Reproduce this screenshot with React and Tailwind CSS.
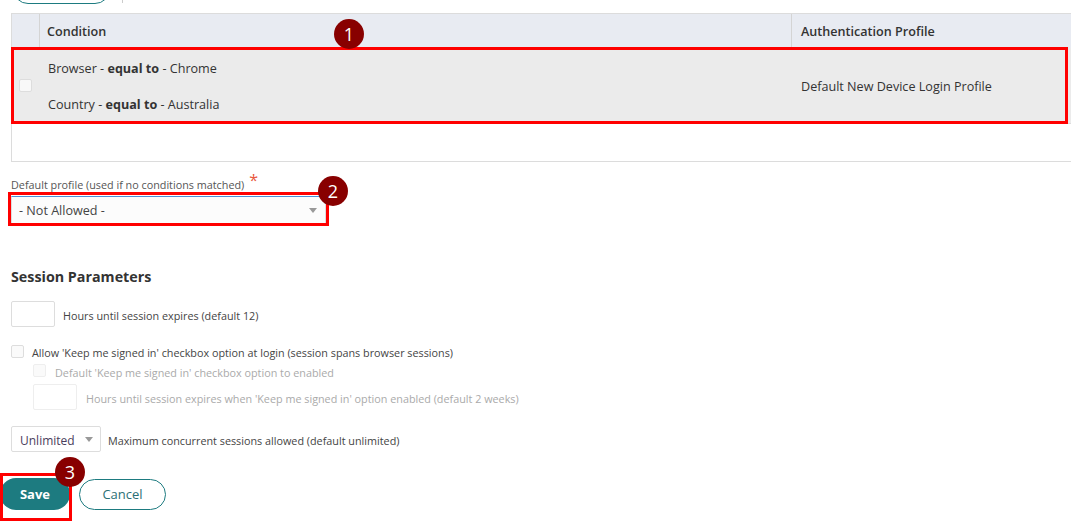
import React from 'react';

function Badge({ n, className }) {
  return (
    <div
      className={`absolute w-[30px] h-[30px] rounded-full bg-[#880000] text-white text-[18px] leading-[30px] text-center ${className}`}
    >
      {n}
    </div>
  );
}

function Caret() {
  return (
    <span className="w-0 h-0 border-l-[4px] border-r-[4px] border-t-[5px] border-l-transparent border-r-transparent border-t-[#999]" />
  );
}

export default function App() {
  return (
    <div
      className="relative w-[1071px] h-[525px] overflow-hidden bg-white text-[#333]"
      style={{ fontFamily: '"Open Sans", "Liberation Sans", sans-serif' }}
    >
      {/* top button, mostly scrolled off */}
      <div className="h-[13px] flex items-start">
        <div className="ml-[13px] -mt-[26px] w-[97px] h-[30px] rounded-full border border-[#1d7b80]" />
        <div className="ml-[12px] w-px h-[3px] bg-[#ccc]" />
      </div>

      {/* conditions table */}
      <div className="ml-[11px] w-[1080px] border border-[#dcdcdc]">
        <div className="flex h-[34px] bg-[#e8ebf2] text-[12.6px] font-semibold">
          <div className="w-[28px] border-r border-[#d4d4d4]" />
          <div className="w-[752px] border-r border-[#d4d4d4] px-[7px] pt-[3px] flex items-center">Condition</div>
          <div className="px-[9px] pt-[3px] flex items-center">Authentication Profile</div>
        </div>
        <div className="flex h-[76px] bg-[#ebebeb] text-[12.6px] border-b border-[#dcdcdc]">
          <div className="w-[28px] flex items-center justify-center">
            <span className="w-[13px] h-[13px] border border-[#ddd] bg-[#f8f8f8] rounded-[2px] -ml-[2px]" />
          </div>
          <div className="w-[752px] px-[8px] pt-[2px] flex flex-col justify-center gap-[16px]">
            <div className="leading-[20px]">Browser - <b>equal to</b> - Chrome</div>
            <div className="leading-[20px]">Country - <b>equal to</b> - Australia</div>
          </div>
          <div className="px-[9px] pt-[4px] flex items-center">Default New Device Login Profile</div>
        </div>
        <div className="h-[37px]" />
      </div>

      {/* default profile */}
      <div className="ml-[11px] mt-[15px] text-[10.8px] leading-[15px] text-[#555] flex items-start">
        Default profile (used if no conditions matched)
        <span className="ml-[5px] -mt-[5px] text-[#e8573d] text-[16px] leading-[16px]">*</span>
      </div>
      <div className="ml-[11px] mt-[4px] w-[315px] h-[29px] bg-[#fcfcfc] border border-[#ddd] border-t-[#4a8fd6] flex items-center justify-between pl-[7px] pr-[8px] text-[12.6px] text-[#444]">
        <span className="pt-[2px]">- Not Allowed -</span>
        <Caret />
      </div>

      {/* session parameters */}
      <div className="ml-[11px] mt-[42px] text-[14.3px] leading-[20px] font-bold text-[#333]">Session Parameters</div>

      <div className="ml-[11px] mt-[14px] h-[26px] flex items-center gap-[8px] text-[10.8px] text-[#444]">
        <div className="w-[44px] h-[26px] border border-[#ddd] rounded-[2px] bg-white" />
        <span className="pt-[4px]">Hours until session expires (default 12)</span>
      </div>

      <div className="ml-[11px] mt-[17px] h-[15px] flex items-center gap-[8px] text-[10.8px] leading-[15px] text-[#444]">
        <span className="w-[13px] h-[13px] border border-[#ddd] rounded-[2px] bg-[#fafafa]" />
        <span className="pt-[2px]">Allow 'Keep me signed in' checkbox option at login (session spans browser sessions)</span>
      </div>
      <div className="ml-[33px] mt-[4px] h-[15px] flex items-center gap-[9px] text-[10.8px] leading-[15px] text-[#aaa]">
        <span className="w-[13px] h-[13px] border border-[#eee] rounded-[2px] bg-[#fafafa]" />
        <span className="pt-[4px]">Default 'Keep me signed in' checkbox option to enabled</span>
      </div>
      <div className="ml-[33px] mt-[6px] h-[26px] flex items-center gap-[9px] text-[10.8px] text-[#aaa]">
        <div className="w-[44px] h-[26px] border border-[#eee] rounded-[2px] bg-white" />
        <span className="pt-[4px]">Hours until session expires when 'Keep me signed in' option enabled (default 2 weeks)</span>
      </div>

      <div className="ml-[11px] mt-[16px] h-[26px] flex items-center gap-[7px] text-[10.8px] text-[#444]">
        <div className="w-[90px] h-[26px] border border-[#ddd] rounded-[2px] bg-white flex items-center justify-between pl-[8px] pr-[7px] text-[12px] text-[#4a3d5c]">
          <span className="pt-[4px]">Unlimited</span>
          <Caret />
        </div>
        <span className="pt-[4px]">Maximum concurrent sessions allowed (default unlimited)</span>
      </div>

      {/* actions */}
      <div className="mt-[26px] flex items-center gap-[9px]">
        <button className="w-[70px] h-[32px] pt-[2px] rounded-full bg-[#1d7b80] text-white text-[13px] font-bold">Save</button>
        <button className="w-[87px] h-[31px] pt-[2px] rounded-full border border-[#1d7b80] bg-white text-[#2b6f75] text-[13px]">Cancel</button>
      </div>

      {/* annotations */}
      <div className="absolute left-[11px] top-[47px] w-[1057px] h-[77px] border-[3px] border-[#ff0000]" />
      <div className="absolute left-[8px] top-[192px] w-[321px] h-[34px] border-[3px] border-[#ff0000]" />
      <div className="absolute left-0 top-[473px] w-[72px] h-[48px] border-[3px] border-[#ff0000]" />
      <Badge n="1" className="left-[334px] top-[19px]" />
      <Badge n="2" className="left-[318px] top-[176px]" />
      <Badge n="3" className="left-[55px] top-[457px]" />
    </div>
  );
}
